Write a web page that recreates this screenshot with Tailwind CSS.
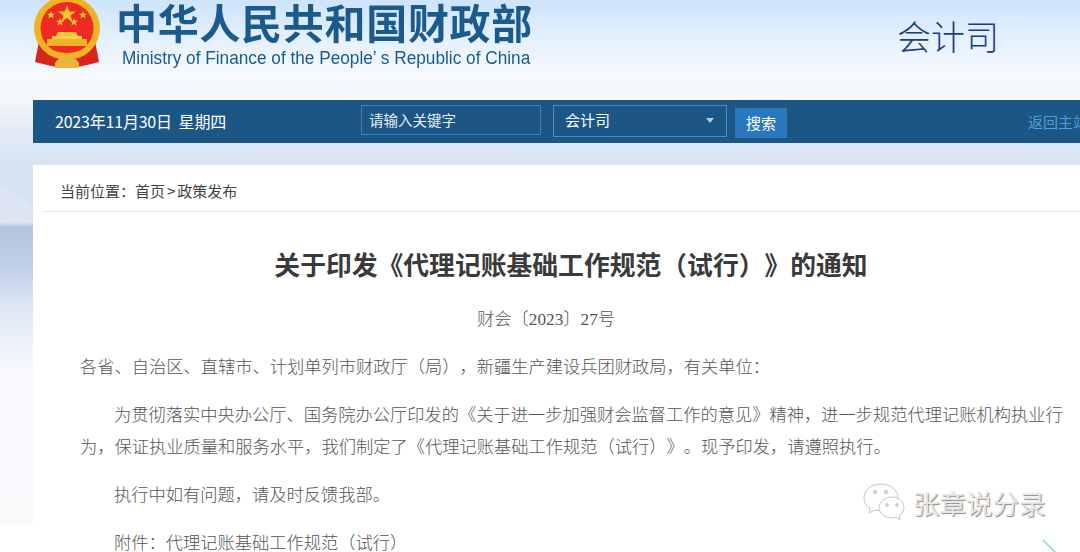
<!DOCTYPE html>
<html lang="zh-CN">
<head>
<meta charset="utf-8">
<script src="https://cdn.jsdelivr.net/npm/@tailwindcss/browser@4"></script>
<title>关于印发《代理记账基础工作规范（试行）》的通知</title>
</head>
<body class="relative w-[1080px] h-[552px] overflow-hidden bg-white font-['Noto_Sans_CJK_SC',sans-serif] [text-spacing-trim:space-all]">
<!-- page background -->
<div class="absolute inset-0 bg-[linear-gradient(180deg,#cde4fc_0px,#e2effd_35px,#f5f9fe_72px,#f4f7fb_100px,#e2ebf6_130px,#d8e3f3_165px,#d6e2f1_222px,#b4c5e0_226px,#bfcee5_262px,#dde6f3_305px,#f6f8fc_370px,#f9fafc_524px,#ffffff_528px)]"></div>
<div class="absolute left-0 top-[184px] w-[33px] h-[42px] bg-[#e2eaf5]/50 blur-[2px] [clip-path:polygon(0_0,100%_55%,100%_100%,0_100%)]"></div>

<div class="relative">
  <!-- header -->
  <header class="h-[100px] flex items-start">
    <svg class="ml-[33px] mt-[-3px] shrink-0 blur-[0.5px]" width="68" height="71" viewBox="0 0 68 71">
      <path d="M6 44 L2 65 L14 68 L28 71 L40 71 L54 68 L66 65 L62 44 Z" fill="#d8261f"/>
      <ellipse cx="34" cy="31" rx="33" ry="32" fill="#f0b323"/>
      <ellipse cx="34" cy="31" rx="26.500" ry="26" fill="#ee2b22"/>
      <path d="M32 9l2.300 6.500h6.700l-5.400 4 2 6.500-5.600-4-5.600 4 2-6.500-5.400-4h6.700z" fill="#f5c62d" transform="translate(2 -1)"/>
      <path d="M18 14l1.100 2.800h3l-2.400 1.800.9 3-2.600-1.800-2.600 1.800.9-3-2.400-1.800h3z" fill="#f5c62d"/>
      <path d="M50 14l1.100 2.800h3l-2.400 1.800.9 3-2.600-1.800-2.600 1.800.9-3-2.400-1.800h3z" fill="#f5c62d"/>
      <path d="M27 21l1.100 2.800h3l-2.400 1.800.9 3-2.600-1.800-2.600 1.800.9-3-2.400-1.800h3z" fill="#f5c62d"/>
      <path d="M41 21l1.100 2.800h3l-2.400 1.800.9 3-2.600-1.800-2.600 1.800.9-3-2.400-1.800h3z" fill="#f5c62d"/>
      <path d="M25 35h18l2 4h-22z" fill="#f5c62d"/>
      <rect x="19" y="39" width="30" height="3" fill="#f5d35a"/>
      <rect x="14" y="42" width="40" height="7" fill="#f0b323"/>
      <path d="M9 49 Q34 66 59 49" fill="none" stroke="#f0b323" stroke-width="3"/>
      <path d="M22 66 Q34 50 46 66 L46 71 L22 71 Z" fill="#e9b43a"/>
    </svg>
    <div class="ml-[15px] mt-[-1px] w-[425px] text-[#1b5a8c] blur-[0.4px] shrink-0">
      <div class="text-[41px] leading-[44px] font-bold tracking-[0.7px] whitespace-nowrap">中华人民共和国财政部</div>
      <div class="ml-[6px] mt-[4px] font-['Liberation_Sans',sans-serif] text-[18px] leading-[22px] whitespace-nowrap scale-x-[0.957] origin-left">Ministry of Finance of the People’ s Republic of China</div>
    </div>
    <div class="ml-[356px] mt-[11px] text-[34px] leading-[50px] font-light text-[#1a3d80] whitespace-nowrap">会计司</div>
  </header>

  <!-- nav bar -->
  <nav class="ml-[33px] w-[1076px] h-[43px] bg-[#1b5684] flex items-center text-white">
    <div class="ml-[22px] w-[306px] text-[16px] tracking-[-0.2px] whitespace-nowrap -mt-[2px]">2023年11月30日&nbsp;&nbsp;星期四</div>
    <div class="w-[180px] h-[30px] -mt-[4px] border border-[#3f7fb5] pl-[7px] text-[14.500px] leading-[28px] text-[#e8f0f7] whitespace-nowrap">请输入关键字</div>
    <div class="ml-[12px] w-[174px] h-[32px] -mt-[2px] border border-[#4a88bd] pl-[11px] pr-[12px] text-[15px] flex items-center justify-between">
      <span>会计司</span>
      <span class="w-0 h-0 border-x-[4px] border-x-transparent border-t-[5px] border-t-[#b9cfe1]"></span>
    </div>
    <div class="ml-[8px] w-[52px] h-[30px] mt-[3px] bg-[#2878bd] text-[15px] leading-[30px] text-center">搜索</div>
    <a class="ml-[241px] mt-[1px] text-[15px] text-[#4f9fd8] whitespace-nowrap">返回主站</a>
  </nav>

  <!-- article card -->
  <main class="ml-[33px] mt-[22px] w-[1076px] h-[365px] bg-white">
    <div class="mx-[11px] h-[47px] border-b border-[#e6e6e6] pl-[16px] text-[15px] leading-[52px] text-[#444] whitespace-nowrap">当前位置：首页<span class="mx-[2px]">&gt;</span>政策发布</div>
    <h1 class="mt-[29px] text-center text-[25.800px] leading-[46px] font-bold text-[#3a3a3a] whitespace-nowrap">关于印发《代理记账基础工作规范（试行）》的通知</h1>
    <div class="font-['Liberation_Serif','Noto_Sans_CJK_SC',serif] text-[17.250px] leading-[32px] font-light text-[#555]">
      <p class="mt-[17px] pl-[444px] whitespace-nowrap">财会〔2023〕27号</p>
      <p class="mt-[16px] pl-[47px] whitespace-nowrap">各省、自治区、直辖市、计划单列市财政厅（局），新疆生产建设兵团财政局，有关单位：</p>
      <div class="mt-[16px] pl-[47px] w-[1035px]">
        <p class="indent-[34px]">为贯彻落实中央办公厅、国务院办公厅印发的《关于进一步加强财会监督工作的意见》精神，进一步规范代理记账机构执业行为，保证执业质量和服务水平，我们制定了《代理记账基础工作规范（试行）》。现予印发，请遵照执行。</p>
      </div>
      <p class="mt-[16px] pl-[81px] whitespace-nowrap">执行中如有问题，请及时反馈我部。</p>
      <p class="mt-[16px] pl-[81px] whitespace-nowrap">附件：代理记账基础工作规范（试行）</p>
    </div>
  </main>
</div>

<!-- watermark -->
<div class="absolute left-[862px] top-[483px] flex items-center">
  <svg width="44" height="38" viewBox="0 0 44 38" fill="#fff" stroke="#c4c4c4" stroke-width="1">
    <path d="M19 1C9 1 2 7 2 15c0 4 2 8 6 10l-1 5 6-3c2 .5 4 .7 6 .7 10 0 17-6 17-13S29 1 19 1z"/>
    <path d="M30 14c-7 0-13 5-13 10.500S23 35 30 35c1.500 0 3-.2 4-.6l4 2.600-.8-4C40 31 42 28 42 24.500 42 19 37 14 30 14z"/>
    <circle cx="13" cy="9" r="1.700" fill="#ddd"/><circle cx="24" cy="9" r="1.700" fill="#ddd"/>
    <circle cx="25" cy="22" r="1.300" fill="#ddd"/><circle cx="35" cy="22" r="1.300" fill="#ddd"/>
  </svg>
  <span class="ml-[7px] mt-[2px] text-[26.500px] leading-[36px] text-[#e8e8e8] [text-shadow:1px_1px_1px_#888] whitespace-nowrap">张章说分录</span>
</div>
<svg class="absolute left-[1040px] top-[538px]" width="20" height="16" viewBox="0 0 20 16"><path d="M3 2L16 15" stroke="#7fe0cf" stroke-width="1.500"/></svg>
</body>
</html>
